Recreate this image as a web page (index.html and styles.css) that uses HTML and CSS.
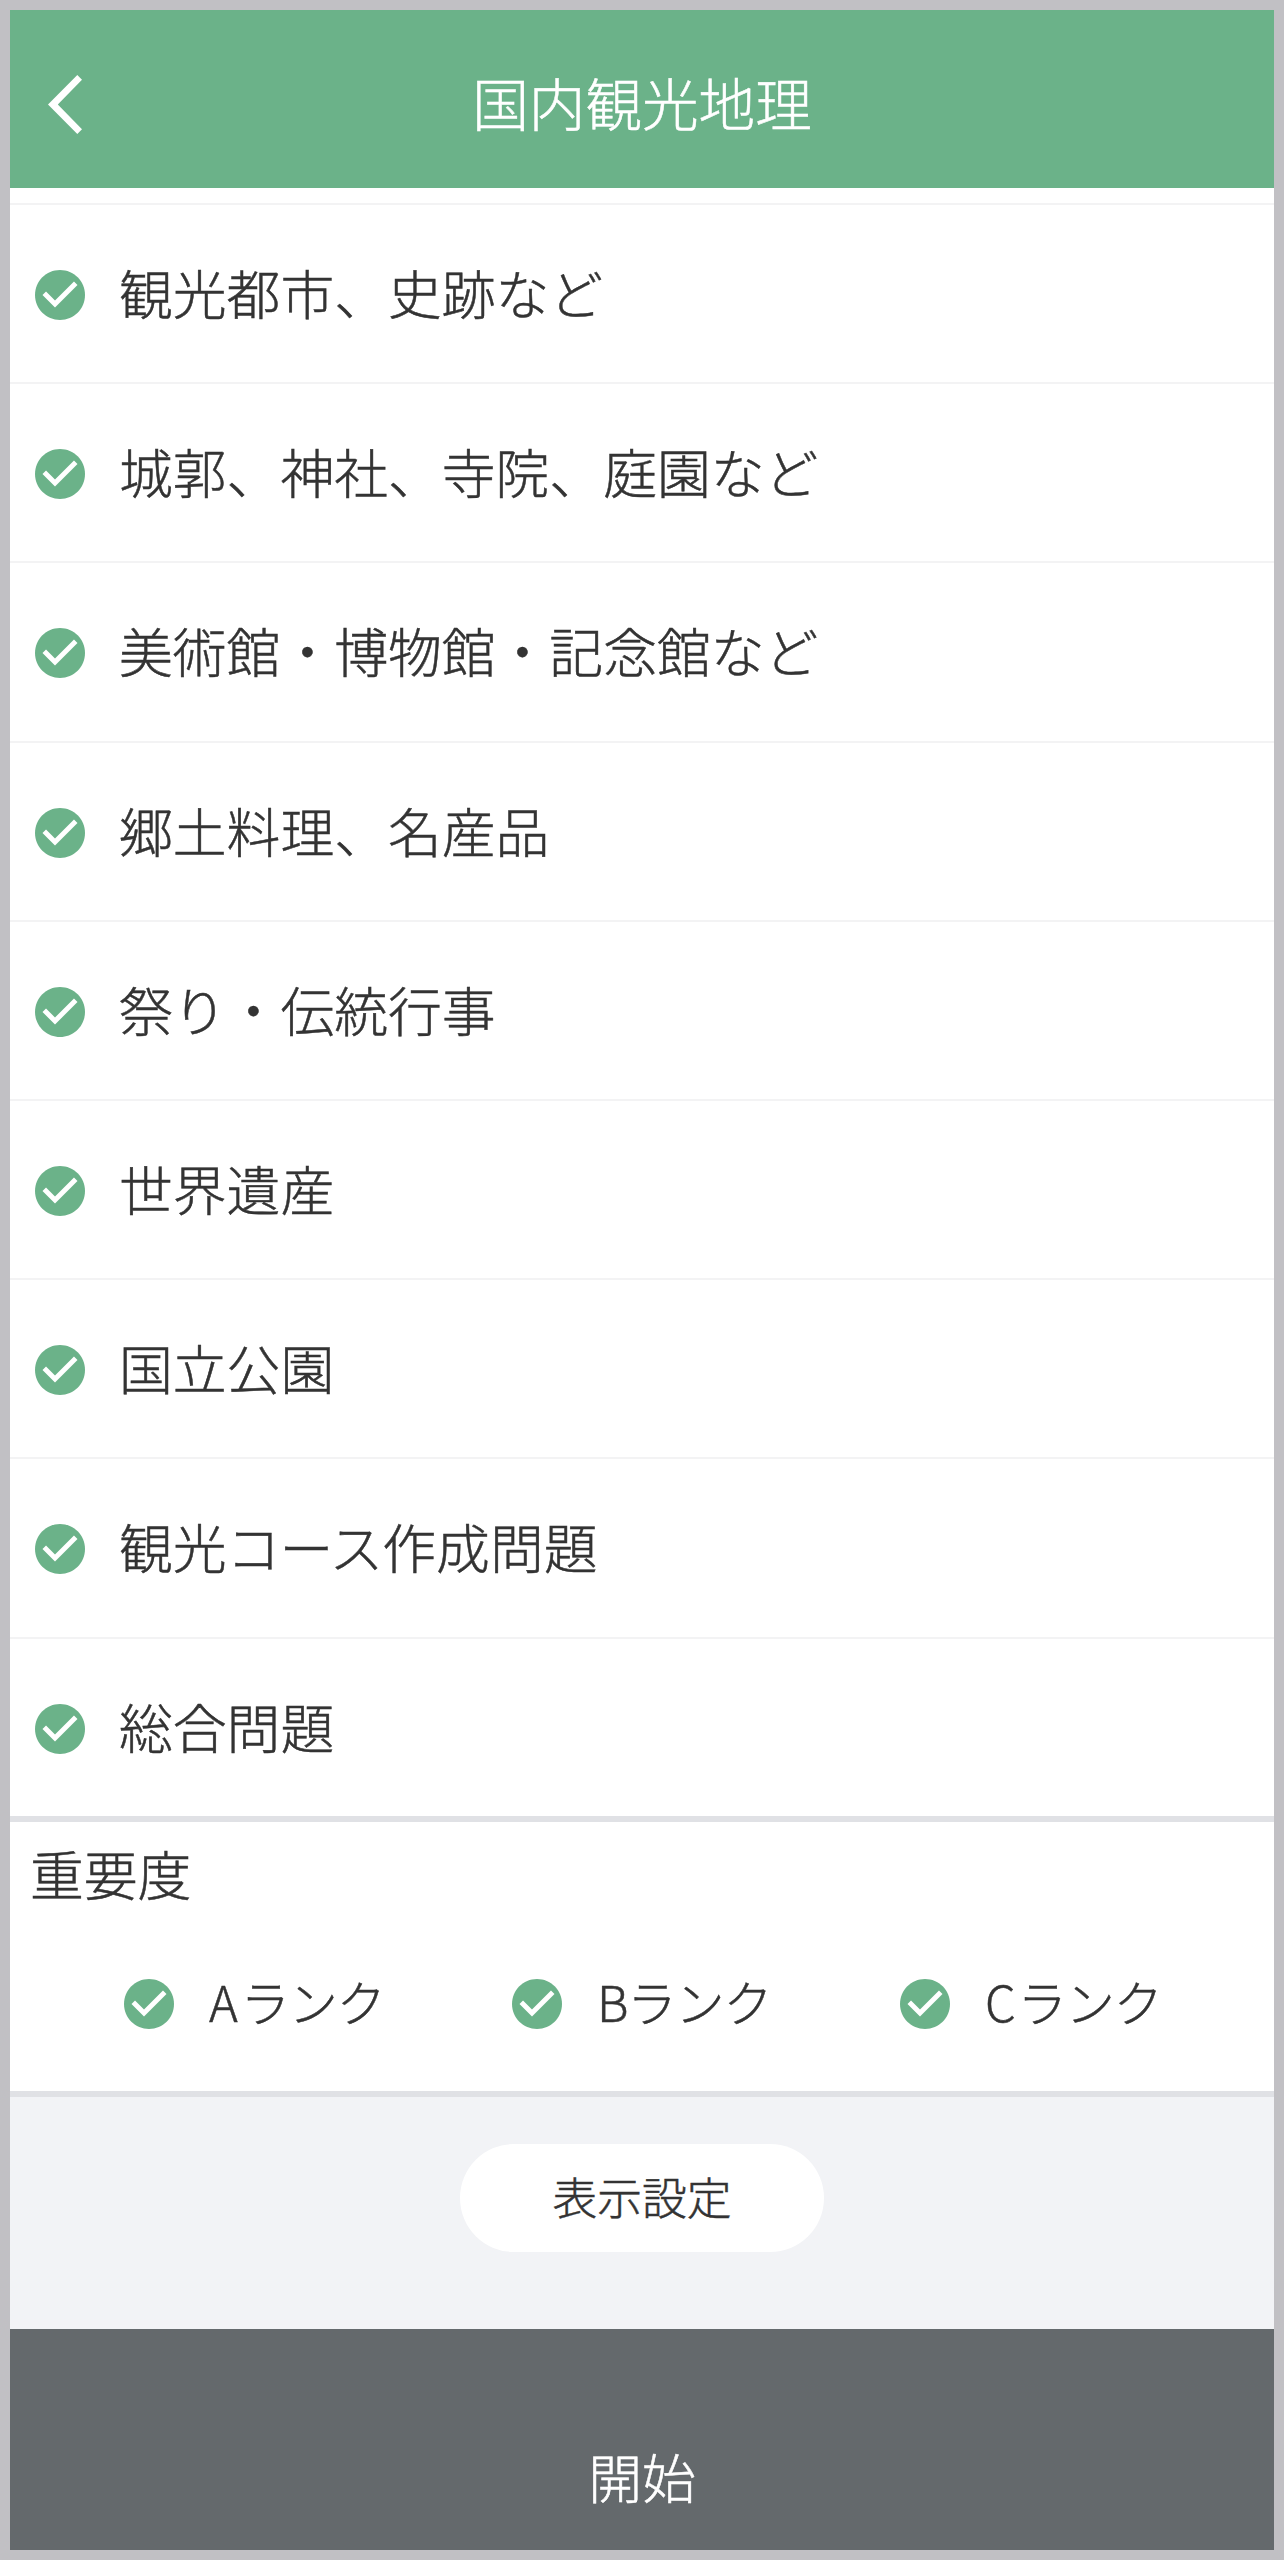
FILE: index.html
```html
<!DOCTYPE html>
<html lang="ja">
<head>
<meta charset="utf-8">
<title>国内観光地理</title>
<link rel="stylesheet" href="styles.css">
</head>
<body>
<svg class="symbols" width="0" height="0" aria-hidden="true">
  <symbol id="check" viewBox="2 2 20 20">
    <path fill="#6bb289" d="M12 2C6.48 2 2 6.48 2 12s4.48 10 10 10 10-4.48 10-10S17.52 2 12 2z"/>
    <path fill="#fff" d="M10 17l-5-5 1.41-1.41L10 14.17l7.59-7.59L19 8l-9 9z"/>
  </symbol>
</svg>
<div class="screen">
  <header class="header">
    <svg class="back" viewBox="0 0 34 59"><path fill="#fff" d="M0 29.5L29.3 0 34 4.8 9.8 29.5 34 54.2 29.3 59z"/></svg>
    <h1 class="title">国内観光地理</h1>
  </header>
  <ul class="list">
    <li class="item"><svg class="check"><use href="#check"/></svg><span class="label">観光都市、史跡など</span></li>
    <li class="item"><svg class="check"><use href="#check"/></svg><span class="label">城郭、神社、寺院、庭園など</span></li>
    <li class="item"><svg class="check"><use href="#check"/></svg><span class="label">美術館・博物館・記念館など</span></li>
    <li class="item"><svg class="check"><use href="#check"/></svg><span class="label">郷土料理、名産品</span></li>
    <li class="item"><svg class="check"><use href="#check"/></svg><span class="label">祭り・伝統行事</span></li>
    <li class="item"><svg class="check"><use href="#check"/></svg><span class="label">世界遺産</span></li>
    <li class="item"><svg class="check"><use href="#check"/></svg><span class="label">国立公園</span></li>
    <li class="item"><svg class="check"><use href="#check"/></svg><span class="label">観光<span class="kana">コース</span>作成問題</span></li>
    <li class="item"><svg class="check"><use href="#check"/></svg><span class="label">総合問題</span></li>
  </ul>
  <section class="importance">
    <h2 class="heading">重要度</h2>
    <div class="ranks">
      <div class="rank"><svg class="check"><use href="#check"/></svg><span class="label"><span class="grade-a">A</span>ランク</span></div>
      <div class="rank"><svg class="check"><use href="#check"/></svg><span class="label">Bランク</span></div>
      <div class="rank"><svg class="check"><use href="#check"/></svg><span class="label"><span class="grade-c">C</span>ランク</span></div>
    </div>
  </section>
  <div class="settings"><button class="pill">表示設定</button></div>
  <button class="start">開始</button>
</div>
</body>
</html>
```
FILE: styles.css
```css
* { box-sizing: border-box; margin: 0; padding: 0; }
body {
  background: #c1c0c4;
  font-family: "Noto Sans CJK JP", sans-serif;
  font-weight: 300;
  color: #333;
  -webkit-text-stroke: 0.5px currentColor;
}
button { border: 0; font: inherit; color: inherit; }
.symbols { display: block; }
.screen {
  display: flex;
  flex-direction: column;
  width: 1284px;
  height: 2560px;
  border: 10px solid #c1c0c4;
  background: #fff;
}
.header {
  display: grid;
  grid-template-columns: 1fr auto 1fr;
  align-items: center;
  height: 178px;
  padding: 11px 38px 0;
  background: #6bb289;
  color: #fff;
}
.back { width: 34px; height: 59px; }
.title {
  padding-bottom: 7px;
  font-size: 56.6px;
  font-weight: 300;
  line-height: 80px;
}
.list { list-style: none; padding-top: 15px; }
.item {
  display: flex;
  align-items: center;
  gap: 34px;
  height: 179.2px;
  padding: 3px 25px 0;
  border-top: 2px solid #f3f3f4;
  font-size: 53.8px;
  line-height: 80px;
  white-space: nowrap;
}
.label { padding-bottom: 6px; }
.check { flex: none; width: 50px; height: 50px; }
.kana { letter-spacing: -1px; }
.importance {
  height: 281px;
  border-top: 6px solid #e0e1e5;
  border-bottom: 6px solid #e0e1e5;
}
.heading {
  padding: 11px 0 0 20px;
  font-size: 53.8px;
  font-weight: 300;
  line-height: 80px;
}
.ranks {
  display: grid;
  grid-template-columns: repeat(3, 388px);
  margin-top: 51px;
  padding-left: 114px;
}
.rank {
  display: flex;
  align-items: center;
  gap: 35px;
  height: 80px;
  font-size: 49px;
  line-height: 74px;
  letter-spacing: -1px;
}
.grade-a { letter-spacing: 3px; }
.grade-c { letter-spacing: 2px; }
.settings {
  display: flex;
  justify-content: center;
  height: 232px;
  padding-top: 47px;
  background: #f2f3f6;
}
.pill {
  width: 364px;
  height: 108px;
  padding-bottom: 4px;
  border-radius: 54px;
  background: #fff;
  font-size: 44.8px;
}
.start {
  flex: 1;
  padding-top: 72px;
  background: #64696c;
  color: #fff;
  font-size: 53.8px;
}
```
